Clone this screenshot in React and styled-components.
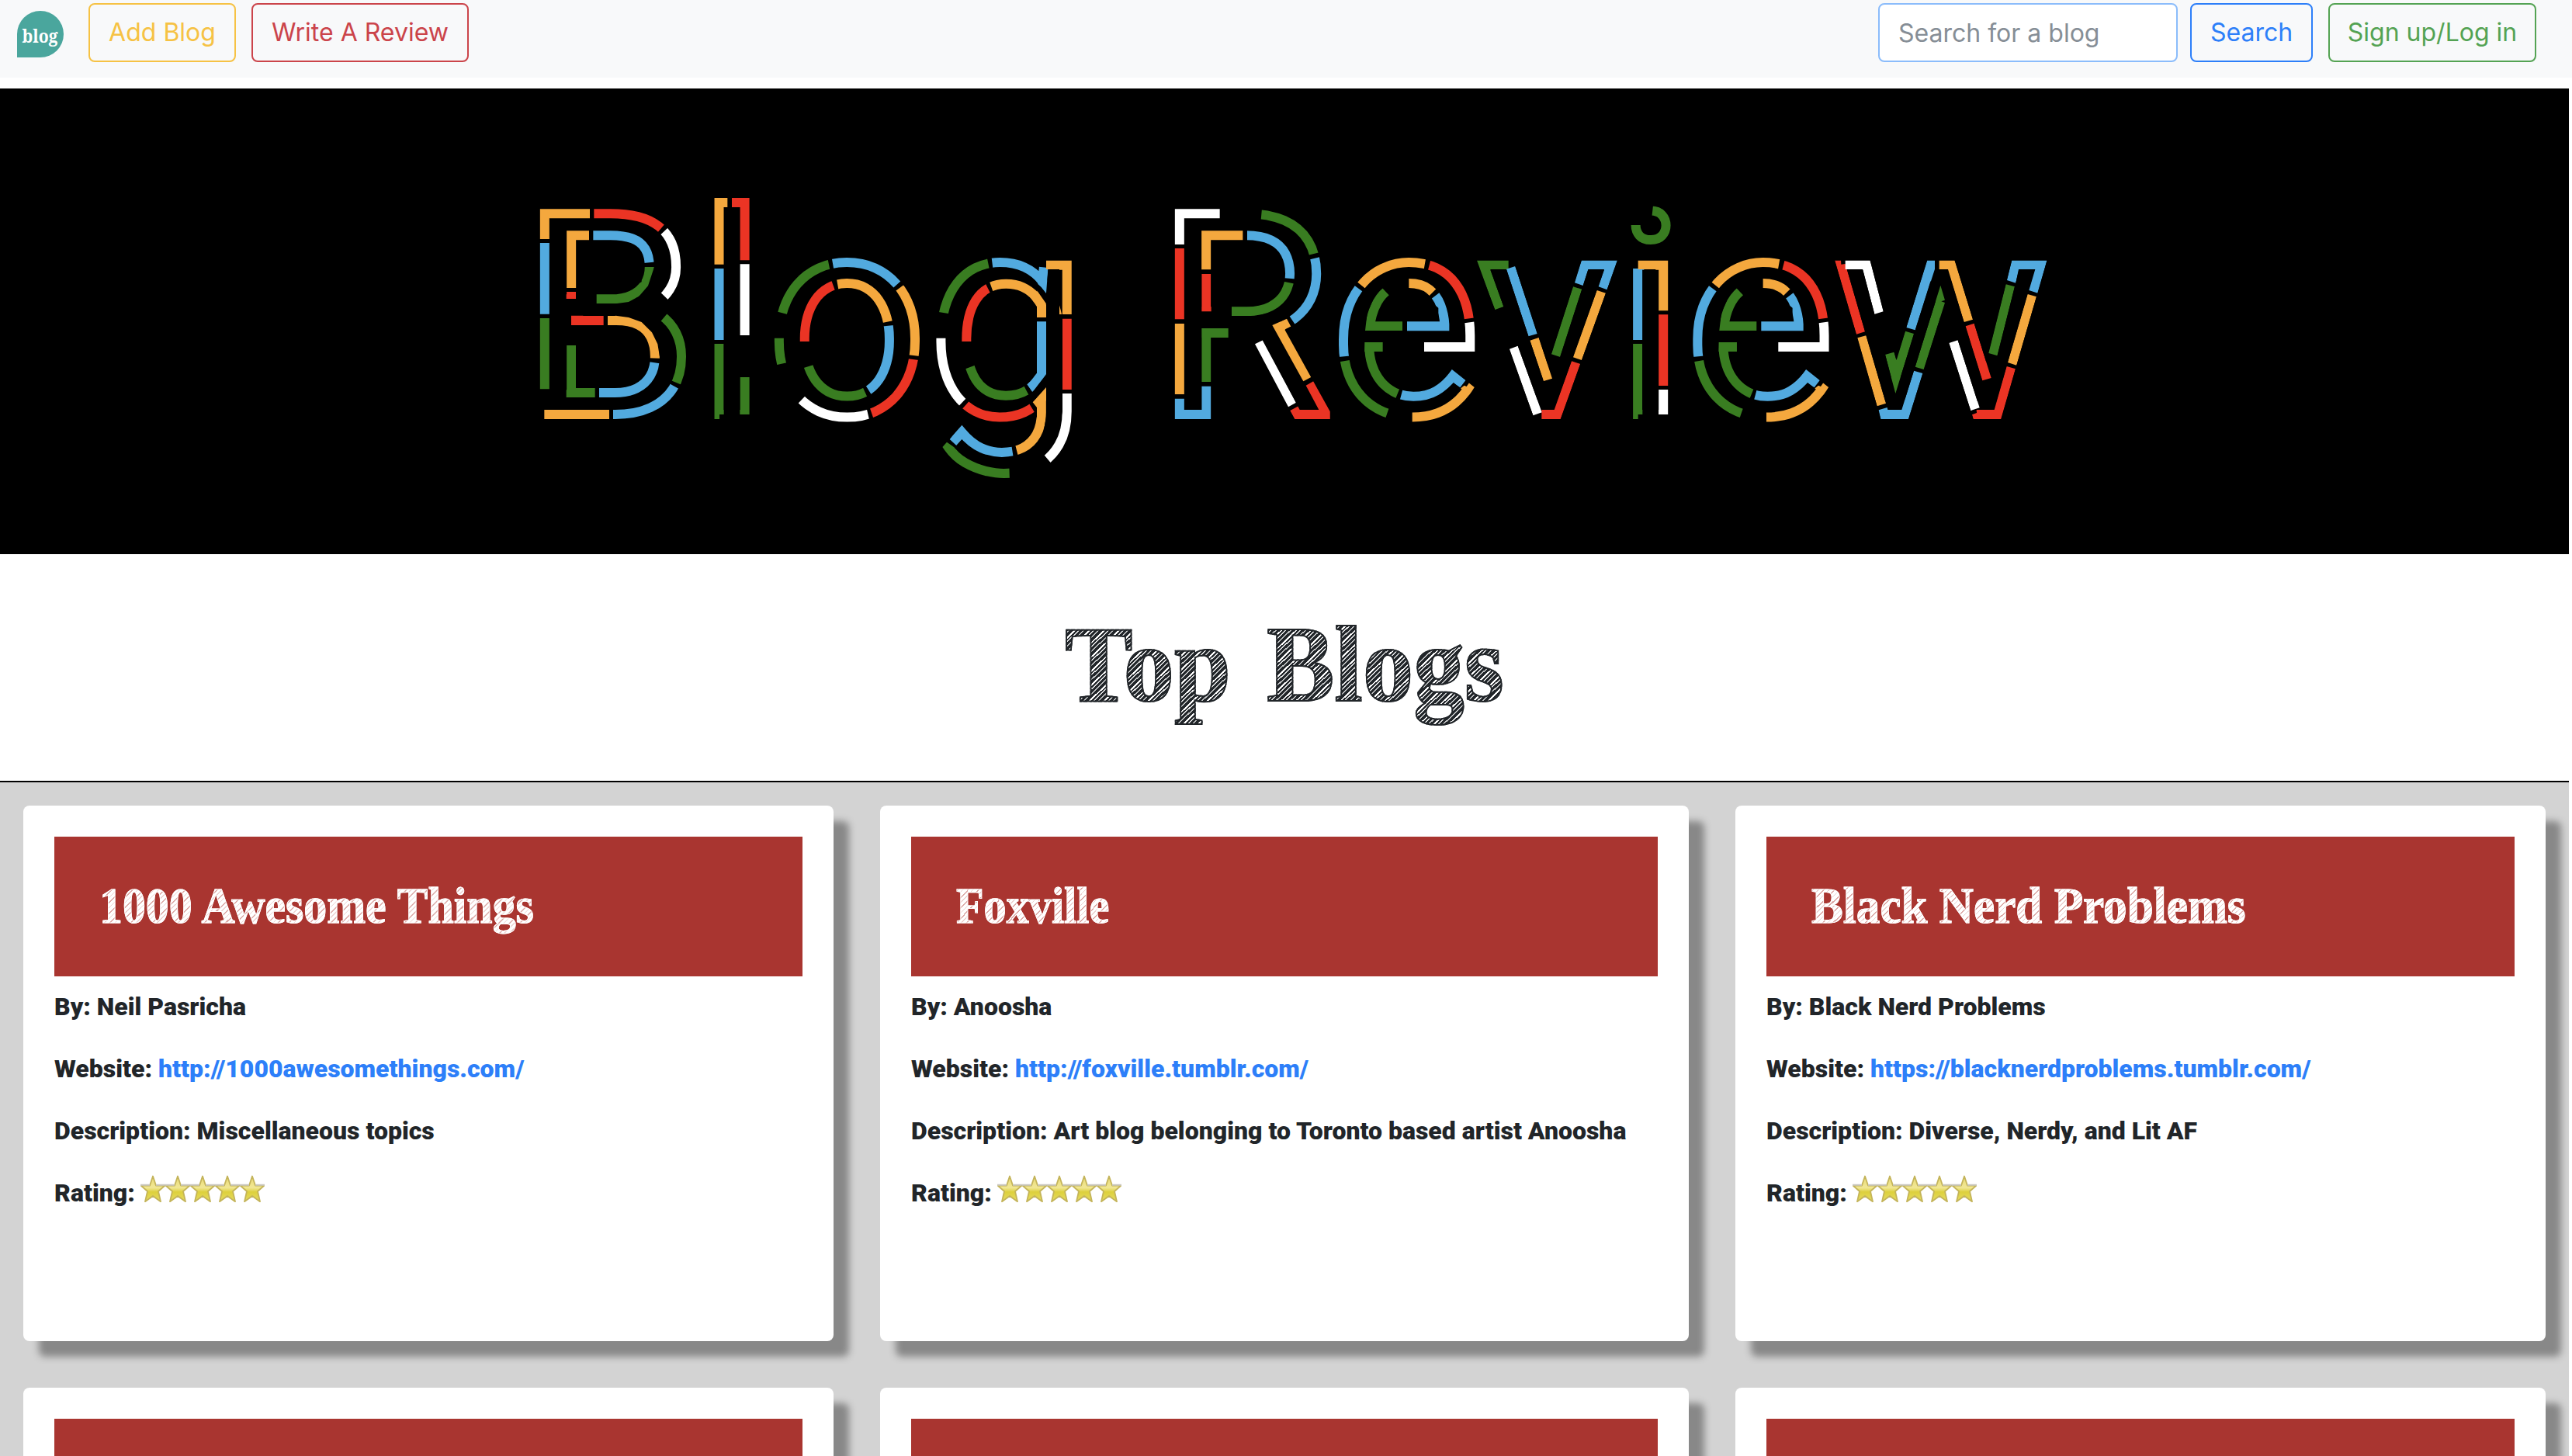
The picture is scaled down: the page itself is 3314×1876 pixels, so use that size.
import React from "react";
import styled, { createGlobalStyle } from "styled-components";

const GlobalStyle = createGlobalStyle`
  *, *::before, *::after { box-sizing: border-box; }
  body {
    margin: 0;
    background: #fff;
    color: #212529;
    font-family: Roboto, "Liberation Sans", sans-serif;
    font-size: 32px;
    line-height: 48px;
  }
`;

const Page = styled.div`
  height: 1876px;
  overflow: hidden;
`;

/* ---------- navigation ---------- */

const Navbar = styled.nav`
  display: flex;
  align-items: flex-start;
  justify-content: space-between;
  height: 100px;
  padding: 4px 46px 0 22px;
  background: #f8f9fa;
`;

const NavGroup = styled.div`
  display: flex;
  align-items: center;
  gap: 20px;
`;

const Logo = styled.svg`
  display: block;
  width: 60px;
  height: 60px;
  margin: 3px 12px 0 0;
`;

const OutlineButton = styled.button`
  width: ${(p) => p.$width}px;
  height: 76px;
  padding: 0;
  border: 2px solid ${(p) => p.$color};
  border-radius: 8px;
  background: transparent;
  color: ${(p) => p.$color};
  font: 400 32px/48px Inter, "Liberation Sans", sans-serif;
  white-space: nowrap;
  text-align: center;
`;

const SearchInput = styled.input`
  width: 386px;
  height: 76px;
  padding: 0 24px;
  border: 2px solid #8bbcfb;
  border-radius: 8px;
  background: #fff;
  font: 400 32px/48px Inter, "Liberation Sans", sans-serif;
  margin-right: -4px;
  &::placeholder { color: #868e96; opacity: 1; }
`;

function BlogLogo() {
  return (
    <Logo viewBox="0 0 60 60">
      <path d="M30 0a30 30 0 1 1 0 60H0V30A30 30 0 0 1 30 0Z" fill="#4aa69d" />
      <text x="6.5" y="41" fill="#fff" fontFamily="'Noto Serif', 'DejaVu Serif', serif" fontWeight="700" fontSize="23" textLength="46" lengthAdjust="spacingAndGlyphs">
        blog
      </text>
    </Logo>
  );
}

/* ---------- banner ---------- */

const Banner = styled.header`
  width: 3310px;
  height: 600px;
  margin-top: 14px;
  background: #000;
`;

const BannerArt = styled.svg`
  display: block;
  width: 3310px;
  height: 600px;
`;

const BannerText = styled.text`
  font-family: Roboto, sans-serif;
  font-size: 364.1px;
  fill: none;
  stroke: ${(p) => p.$color};
  stroke-width: 12px;
`;

const PALETTE = {
  green: "#397d21",
  blue: "#52aadf",
  orange: "#f4a83e",
  red: "#eb3424",
  white: "#ffffff",
};

const LETTER_X = "671.8 898.8 987.5 1195.2 1400 1489.8 1714.5 1905.8 2082.4 2170.8 2364.4";

const box = (x1, y1, x2, y2) => `${x1},${y1} ${x2},${y1} ${x2},${y2} ${x1},${y2}`;

/* Windows through which each coloured outline shows, in thirds of a pixel. */
const E_DASHES = {
  orange: [
    "765,391 815,431 880,370 980,352 1032,362 1044,295 960,290 840,310",
    "976,375 1040,375 1092,416 1046,462 1010,435 976,435",
    "989,895 1075,880 1150,832 1190,800 1199,804 1210,788 1245,810 1140,950 989,950",
  ],
  red: ["1064,300 1150,330 1245,450 1245,536 1178,545 1160,470 1110,400 1047,365"],
  white: ["1180,560 1245,551 1245,680 1035,680 1035,633 1185,633"],
  blue: [
    "1107,431 1145,500 1145,600 969,600 969,552 1090,552 1090,500 1055,471",
    "757,407 806,443 770,510 758,560 757,685 695,691 695,560",
    "955,805 1000,812 1070,785 1144,733 1196,779 1174,808 1150,792 1080,850 1000,872 938,868",
  ],
  green: [
    "865,415 909,461 875,505 855,552 951,552 951,588 807,588 815,520 838,468",
    "805,633 875,633 875,669 860,669 870,750 945,800 920,862 850,830 800,740 804,680",
    "698,710 760,700 790,800 903,876 882,937 760,880",
  ],
};

const DASHES = [
  {
    x: 660,
    parts: {
      orange: [
        "95,105 300,105 300,165 155,165 155,234 95,234",
        box(124, 894, 375, 945),
        "200,190 297,190 297,245 255,245 255,423 200,423",
        "369,530 400,530 450,537 500,555 540,595 562,640 571,695 525,694 510,640 450,580 369,575",
        box(770, 60, 832, 332),
      ],
      red: [
        "316,105 480,95 599,165 555,217 400,165 316,165",
        box(209, 438, 246, 465),
        box(228, 530, 353, 567),
        box(849, 60, 930, 316),
      ],
      white: [
        "612,181 680,240 680,420 612,478 565,432 580,400 590,260 562,228",
        box(870, 331, 930, 606),
      ],
      green: [
        "610,509 690,600 690,812 600,775 620,690 600,610 562,566",
        box(95, 540, 155, 814),
        "500,342 549,342 525,415 490,455 450,477 400,484 326,484 326,440 420,440 500,400",
        "209,645 246,645 246,810 320,810 320,846 209,846",
        box(770, 639, 818, 912),
        box(770, 911, 801, 931),
        box(880, 768, 930, 912),
      ],
      blue: [
        "600,788 675,830 560,960 390,960 390,870 480,862 550,825",
        box(95, 249, 155, 524),
        "313,190 420,190 500,210 560,270 560,322 500,328 470,290 400,250 313,250",
        "525,708 580,716 560,790 490,845 400,860 336,860 336,790 450,780 510,720",
        box(770, 348, 830, 624),
      ],
    },
  },
  {
    x: 980,
    parts: {
      green: [
        "50,511 55,450 140,300 257,298 270,362 200,395 140,455 112,527",
        "40,617 105,617 105,711 40,725",
        "391,798 418,857 340,875 240,870 150,760 150,737 215,717 260,800 330,810",
        "670,513 740,524 780,440 840,372 886,358 873,294 760,310 675,440",
        "780,740 840,718 890,800 950,808 1013,792 1043,849 950,870 860,865 770,770",
        "718,1018 742,1034 800,1080 900,1110 961,1110 963,1170 800,1160 690,1040",
      ],
      blue: [
        "273,295 400,290 500,330 560,380 505,430 430,370 340,352 285,362",
        "465,572 535,565 535,700 500,780 437,849 397,785 460,720",
        "891,290 950,290 1040,320 1075,352 1076,341 1104,344 1111,352 1104,444 1085,420 1050,388 1000,360 930,345 899,355",
        "1068,553 1104,553 1104,757 1051,826 1030,796 1068,752",
        "778,945 731,1008 757,1032 778,1010 820,1060 900,1090 979,1090 969,1025 900,1020 840,990",
      ],
      orange: [
        "566,402 640,480 640,690 560,680 560,560 510,443",
        "291,372 340,368 440,400 520,500 525,547 460,560 400,450 303,440",
        "1104,305 1215,305 1215,525 1155,525 1155,351 1104,351",
        "881,388 950,378 1020,390 1070,435 1104,484 1104,537 1068,537 1068,495 1010,445 950,430 902,447",
        "1104,807 1104,920 1090,1000 1050,1050 998,1082 982,1020 1030,990 1068,920 1068,885 1052,865",
      ],
      red: [
        "560,695 640,706 600,850 440,938 419,877 480,830 525,780",
        "140,630 145,520 200,410 270,383 292,445 230,480 200,560 200,630",
        box(1167, 542, 1215, 816),
        "768,630 825,630 830,560 895,457 865,397 800,440 768,540",
        "816,850 870,880 930,885 1000,875 1033,862 1066,915 930,955 770,930 771,900",
      ],
      white: [
        "181,832 240,872 330,882 408,880 423,945 300,960 180,930 135,880",
        "1167,831 1215,831 1215,1000 1131,1110 1088,1059 1150,980 1167,900",
        "665,617 725,617 735,700 803,841 758,888 680,780",
      ],
    },
  },
  {
    x: 1490,
    parts: {
      white: [
        "60,105 245,105 245,165 120,165 120,255 60,255",
        "381,640 412,625 540,866 510,883",
      ],
      red: [
        box(60, 270, 120, 544),
        "578,800 608,783 673,900 673,930 535,930 517,897 549,880 556,894 628,894",
        box(175, 369, 212, 514),
      ],
      orange: [
        box(60, 561, 120, 834),
        "448,567 504,542 520,572 498,583 599,767 568,784",
        "165,190 334,190 334,250 225,250 225,352 165,352",
      ],
      blue: [
        "60,851 108,851 108,894 175,894 175,803 225,803 225,945 60,945",
        "585,315 655,298 655,420 600,520 542,573 508,522 570,450 595,380",
        "351,190 430,190 510,240 550,320 550,389 485,384 470,300 351,250",
      ],
      green: [
        "409,105 500,105 600,180 645,282 575,299 535,250 470,198 403,170",
        "485,397 540,408 510,470 450,515 390,531 291,531 291,485 380,485 460,450",
        "175,579 278,579 278,615 225,615 225,786 175,786",
      ],
    },
  },
  { x: 1490, parts: E_DASHES },
  { x: 1946.3, parts: E_DASHES },
  {
    x: 1900,
    parts: {
      green: [
        "5,315 131,315 131,351 61,351 112,495 79,507",
        "381,418 415,428 331,690 297,679",
        box(600, 639, 649, 912),
        box(600, 911, 632, 931),
        "691,95 775,95 775,270 595,270 595,180 686,180 686,141",
      ],
      blue: [
        "123,350 157,339 242,600 208,610",
        "414,315 552,315 512,430 479,418 501,351 439,351 419,414 387,403",
        box(600, 348, 655, 624),
      ],
      orange: [
        "214,626 248,615 300,773 267,783",
        "473,432 507,443 414,702 381,691",
        "632,305 760,305 760,511 700,511 700,351 632,351",
      ],
      red: [
        "259,894 308,894 375,706 409,717 333,930 259,930",
        box(700, 526, 760, 801),
      ],
      white: ["135,659 167,647 260,904 226,916", box(711, 816, 760, 912)],
    },
  },
  {
    x: 2200,
    parts: {
      red: [
        "492,315 516,315 517,332 533,330 609,592 576,602",
        "998,571 1031,560 1097,771 1063,781",
        "1023,913 1041,906 1040,894 1109,894 1157,726 1191,736 1136,930 1028,930",
      ],
      white: [
        "533,315 629,315 680,514 646,524 600,351 533,351",
        "934,636 968,625 1052,886 1018,897",
      ],
      orange: [
        "580,616 613,607 690,869 656,880",
        "896,315 956,315 1026,545 992,555 930,351 896,351",
        "1238,447 1272,457 1195,722 1161,711",
      ],
      blue: [
        "662,895 695,885 697,894 751,894 798,743 832,753 777,930 670,930",
        "849,315 879,315 879,350 803,586 769,576",
        "1177,315 1313,315 1277,443 1243,432 1267,351 1203,351 1192,404 1158,393",
      ],
      green: [
        "687,681 721,671 731,702 765,590 798,600 727,831",
        "901,413 918,470 904,475 918,480 836,738 803,728",
        "1154,409 1188,418 1121,685 1087,675",
      ],
    },
  },
];

function BannerTitle() {
  return (
    <BannerArt viewBox="0 114 3310 600" role="img" aria-label="Blog Review">
      <defs>
        {Object.keys(PALETTE).map((name) => (
          <clipPath id={`dash-${name}`} key={name}>
            {DASHES.flatMap((group, g) =>
              (group.parts[name] || []).map((points, i) => (
                <polygon
                  key={`${g}-${i}`}
                  points={points}
                  transform={`translate(${group.x} 230) scale(0.33333)`}
                />
              ))
            )}
          </clipPath>
        ))}
      </defs>
      {Object.entries(PALETTE).map(([name, color]) => (
        <g key={name} clipPath={`url(#dash-${name})`}>
          <BannerText x={LETTER_X} y="534" $color={color}>
            Blog Review
          </BannerText>
        </g>
      ))}
    </BannerArt>
  );
}

/* ---------- heading ---------- */

const Heading = styled.section`
  display: flex;
  justify-content: center;
  width: 3310px;
  height: 294px;
  padding-top: 62px;
  border-bottom: 2px solid #000;
`;

const HeadingText = styled.h1`
  margin: 0;
  font: 700 139px/160px "Liberation Serif", "Times New Roman", serif;
  word-spacing: 14px;
  white-space: nowrap;
  transform: scaleX(0.943);
  color: transparent;
  -webkit-text-stroke: 2px #212529;
  background: repeating-linear-gradient(138deg, #212529 0 3px, #c4c6c7 3px 4.5px, #212529 4.5px 8px, #fff 8px 10px, #212529 10px 12px, #e4e5e6 12px 13.5px);
  -webkit-background-clip: text;
  background-clip: text;
`;

/* ---------- cards ---------- */

const CardGrid = styled.main`
  display: grid;
  grid-template-columns: 1104px 1102px 1104px;
  width: 3310px;
  background: #d3d3d3;
`;

const Card = styled.article`
  height: 690px;
  margin: 30px;
  padding: 40px;
  border-radius: 8px;
  background: #fff;
  box-shadow: 20px 20px 10px #888;
`;

const CardHeader = styled.div`
  display: flex;
  align-items: flex-start;
  height: 180px;
  margin-bottom: 15px;
  padding: 51px 58px 0;
  background: #a93530;
`;

const CardTitle = styled.h2`
  margin: 0;
  font: 700 66px/76px "Liberation Serif", "Times New Roman", serif;
  white-space: nowrap;
  transform: scaleX(${(p) => p.$stretch});
  transform-origin: left;
  color: transparent;
  -webkit-text-stroke: 1px #fff;
  background: repeating-linear-gradient(138deg, #fff 0 4px, #dba8a5 4px 5.5px, #fff 5.5px 9px, #ecd0cf 9px 10px);
  -webkit-background-clip: text;
  background-clip: text;
`;

const Field = styled.p`
  display: flex;
  height: 48px;
  margin: 0 0 32px;
  font-weight: 900;
  white-space: pre;
`;

const Link = styled.a`
  color: #2d7ff9;
  text-decoration: none;
`;

const Stars = styled.svg`
  display: block;
  width: 160px;
  height: 36px;
  margin-left: -1px;
`;

function Rating() {
  return (
    <Stars viewBox="0 0 160 36">
      <defs>
        <linearGradient id="star-gold" x1="0" y1="0" x2="0" y2="1">
          <stop offset="0" stopColor="#eadb74" />
          <stop offset="0.45" stopColor="#f1e795" />
          <stop offset="0.62" stopColor="#ddd03c" />
          <stop offset="1" stopColor="#e6dc62" />
        </linearGradient>
      </defs>
      {[0, 1, 2, 3, 4].map((i) => (
        <g key={i} transform={`translate(${i * 32} 0)`}>
          <path d="M16 2.5 20 14.5H31.5L23 22 26 35.2 16 28 6 35.2 9 22 0.5 14.5H12Z" fill="url(#star-gold)" stroke="#c4b45a" strokeWidth="1.8" strokeLinejoin="round" />
          <path d="M0 13.8H12M20 13.8H32" stroke="#c9c7c0" strokeWidth="2" />
        </g>
      ))}
    </Stars>
  );
}

const BLOGS = [
  {
    title: "1000 Awesome Things",
    stretch: 0.907,
    author: "Neil Pasricha",
    url: "http://1000awesomethings.com/",
    description: "Miscellaneous topics",
  },
  {
    title: "Foxville",
    stretch: 0.882,
    author: "Anoosha",
    url: "http://foxville.tumblr.com/",
    description: "Art blog belonging to Toronto based artist Anoosha",
  },
  {
    title: "Black Nerd Problems",
    stretch: 0.927,
    author: "Black Nerd Problems",
    url: "https://blacknerdproblems.tumblr.com/",
    description: "Diverse, Nerdy, and Lit AF",
  },
];

function BlogCard({ blog }) {
  return (
    <Card>
      <CardHeader>
        <CardTitle $stretch={blog.stretch}>{blog.title}</CardTitle>
      </CardHeader>
      <Field>By: {blog.author}</Field>
      <Field>
        Website: <Link href={blog.url}>{blog.url}</Link>
      </Field>
      <Field>Description: {blog.description}</Field>
      <Field>
        Rating: <Rating />
      </Field>
    </Card>
  );
}

export default function App() {
  return (
    <Page>
      <GlobalStyle />
      <Navbar>
        <NavGroup>
          <BlogLogo />
          <OutlineButton $color="#f6c244" $width={190}>Add Blog</OutlineButton>
          <OutlineButton $color="#cb444a" $width={280}>Write A Review</OutlineButton>
        </NavGroup>
        <NavGroup>
          <SearchInput placeholder="Search for a blog" />
          <OutlineButton $color="#2d7ff9" $width={158}>Search</OutlineButton>
          <OutlineButton $color="#54a353" $width={268}>Sign up/Log in</OutlineButton>
        </NavGroup>
      </Navbar>
      <Banner>
        <BannerTitle />
      </Banner>
      <Heading>
        <HeadingText>Top Blogs</HeadingText>
      </Heading>
      <CardGrid>
        {BLOGS.map((blog) => (
          <BlogCard key={blog.title} blog={blog} />
        ))}
        {[0, 1, 2].map((i) => (
          <Card key={i}>
            <CardHeader />
          </Card>
        ))}
      </CardGrid>
    </Page>
  );
}
